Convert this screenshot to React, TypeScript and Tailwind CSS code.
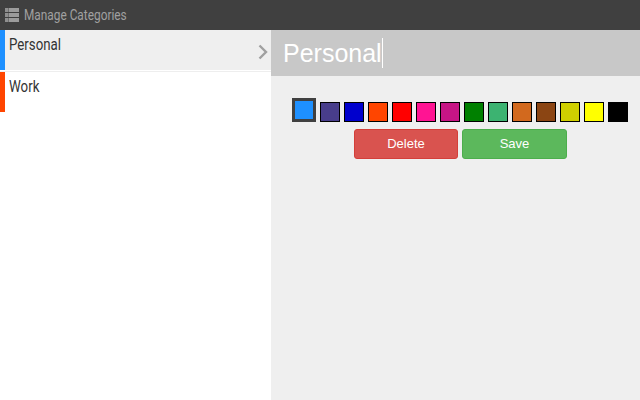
const SWATCHES = [
  "bg-[#483d8b]",
  "bg-[#0000cd]",
  "bg-[#ff4500]",
  "bg-[#ff0000]",
  "bg-[#ff1493]",
  "bg-[#c71585]",
  "bg-[#008000]",
  "bg-[#3cb371]",
  "bg-[#d2691e]",
  "bg-[#8b4513]",
  "bg-[#d0d000]",
  "bg-[#ffff00]",
  "bg-[#000000]",
];

function ListIcon() {
  return (
    <svg width="14" height="14" viewBox="0 0 14 14" className="shrink-0">
      <rect x="0" y="0" width="3" height="4" fill="#8f8f8f" />
      <rect x="3.5" y="0" width="10.5" height="4" fill="#9c9c9c" />
      <rect x="0" y="5" width="3" height="4" fill="#8f8f8f" />
      <rect x="3.5" y="5" width="10.5" height="4" fill="#9c9c9c" />
      <rect x="0" y="10" width="3" height="4" fill="#8f8f8f" />
      <rect x="3.5" y="10" width="10.5" height="4" fill="#9c9c9c" />
    </svg>
  );
}

export default function App() {
  return (
    <div className="w-[640px] h-[400px] flex flex-col overflow-hidden bg-white font-['Liberation_Sans',sans-serif]">
      {/* Top bar */}
      <div className="h-[30px] shrink-0 bg-[#404040] flex items-center pl-[5px] gap-[5px]">
        <ListIcon />
        <span className="text-[15px] text-[#a0a0a0] font-['Roboto',sans-serif] origin-left scale-x-[0.79] whitespace-nowrap">
          Manage Categories
        </span>
      </div>

      <div className="flex-1 flex min-h-0">
        {/* Category list */}
        <div className="w-[271px] shrink-0 bg-white">
          <div className="h-[40px] bg-[#efefef] border-l-[5px] border-[#1e90ff] pl-[4px] pt-[6px] relative">
            <span className="block text-[16px] leading-[18px] text-[#333] font-['Roboto',sans-serif] origin-left scale-x-[0.83]">
              Personal
            </span>
            <svg width="10" height="16" viewBox="0 0 10 16" className="absolute right-[3px] top-[14px]">
              <path d="M1.5 1.5 L8 8 L1.5 14.5" fill="none" stroke="#a0a0a0" strokeWidth="2.4" />
            </svg>
          </div>
          <div className="h-[2px] border-b border-[#eeeeee]" />
          <div className="h-[40px] border-l-[5px] border-[#ff4500] pl-[4px] pt-[6px]">
            <span className="block text-[16px] leading-[18px] text-[#333] font-['Roboto',sans-serif] origin-left scale-x-[0.83]">
              Work
            </span>
          </div>
        </div>

        {/* Editor */}
        <div className="flex-1 bg-[#efefef] flex flex-col">
          <div className="h-[46px] shrink-0 bg-[#c8c8c8] flex items-center pl-[12px]">
            <span className="text-[25px] leading-[30px] text-white">Personal</span>
            <span className="w-px h-[30px] bg-white" />
          </div>
          <div className="flex flex-col items-center pl-[10px] pt-[22px] gap-[7px]">
            <div className="flex items-end gap-[4px] mr-[2px]">
              <div className="w-[24px] h-[24px] bg-[#1e90ff] border-[3px] border-[#404040]" />
              {SWATCHES.map((c) => (
                <div key={c} className={`w-[20px] h-[20px] border border-black ${c}`} />
              ))}
            </div>
            <div className="flex gap-[4px]">
              <button className="w-[104px] h-[30px] rounded-[3px] bg-[#d9534f] border border-[#d43f3a] text-white text-[13px]">
                Delete
              </button>
              <button className="w-[105px] h-[30px] rounded-[3px] bg-[#5cb85c] border border-[#4cae4c] text-white text-[13px]">
                Save
              </button>
            </div>
          </div>
        </div>
      </div>
    </div>
  );
}
